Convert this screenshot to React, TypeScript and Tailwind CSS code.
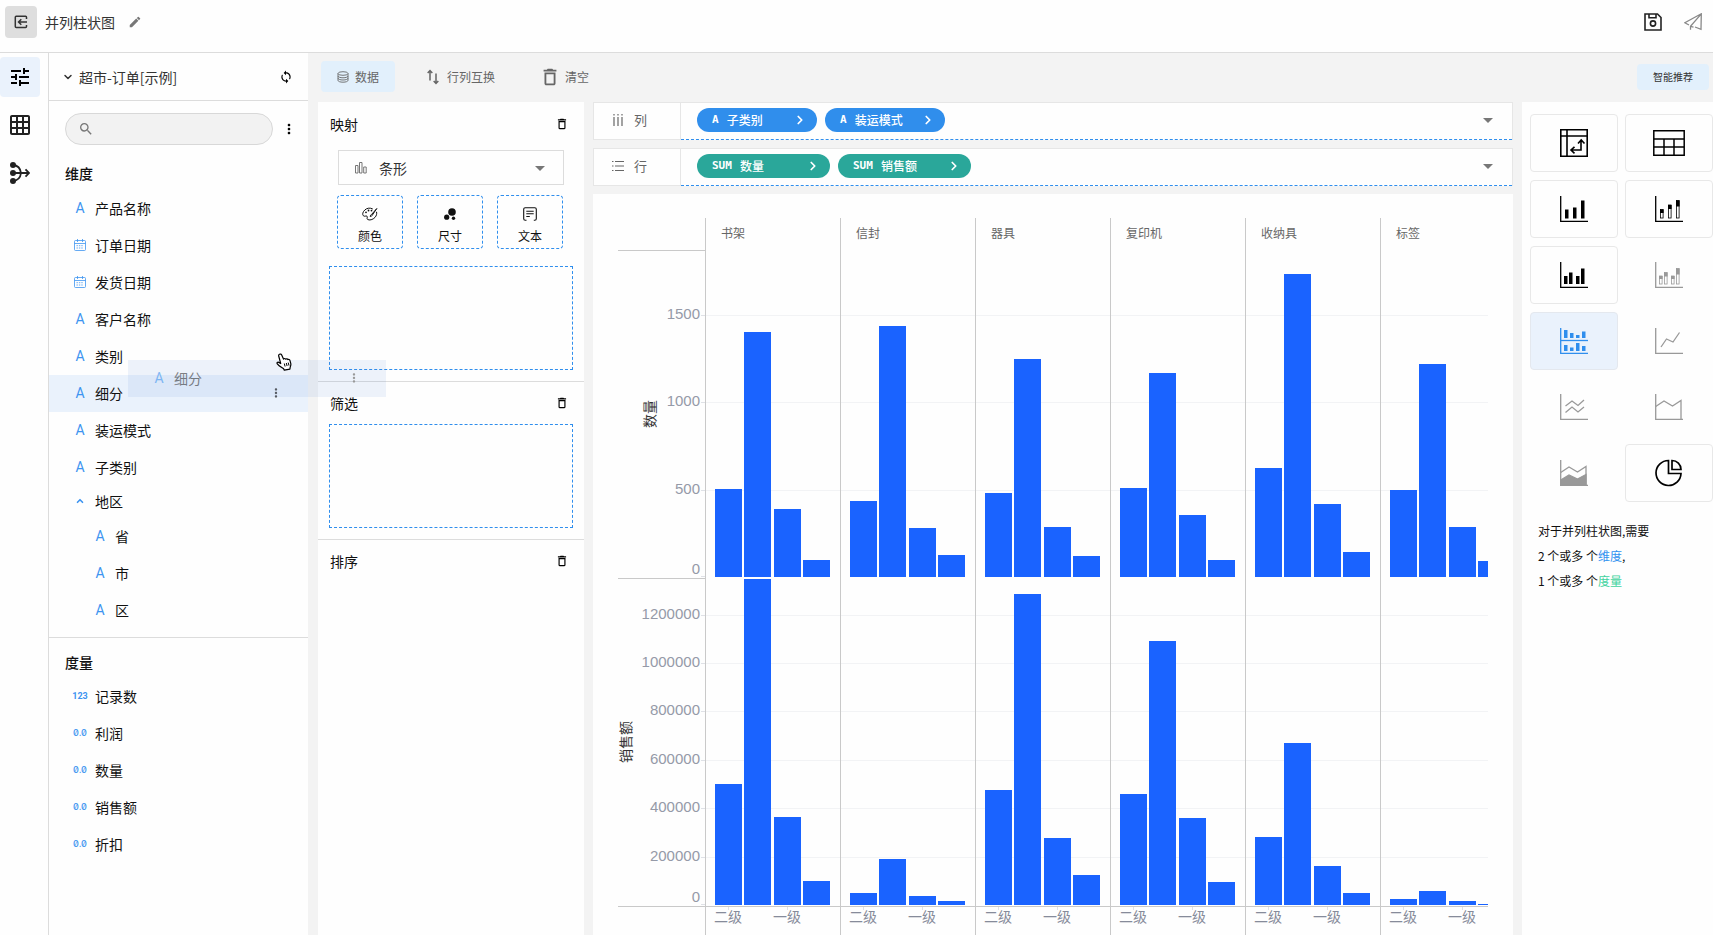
import { useState } from "react";
import type { ReactNode } from "react";
import { MdTune, MdGridOn, MdMoreVert, MdEdit, MdSearch, MdArrowDropDown, MdDeleteOutline, MdSync } from "react-icons/md";
import { ChevronDown, ChevronRight, ChevronUp } from "lucide-react";

type FieldKind = "text" | "date" | "int" | "float";
interface Field { name: string; kind: FieldKind; }

const dimensions: Field[] = [
  { name: "产品名称", kind: "text" },
  { name: "订单日期", kind: "date" },
  { name: "发货日期", kind: "date" },
  { name: "客户名称", kind: "text" },
  { name: "类别", kind: "text" },
  { name: "细分", kind: "text" },
  { name: "装运模式", kind: "text" },
  { name: "子类别", kind: "text" },
];
const regions: Field[] = [
  { name: "省", kind: "text" },
  { name: "市", kind: "text" },
  { name: "区", kind: "text" },
];
const measures: Field[] = [
  { name: "记录数", kind: "int" },
  { name: "利润", kind: "float" },
  { name: "数量", kind: "float" },
  { name: "销售额", kind: "float" },
  { name: "折扣", kind: "float" },
];

const chartData = [
  { name: "书架",   count: [504, 1406, 387, 100], sales: [500000, 1400000, 364000, 99000] },
  { name: "信封",   count: [438, 1435, 278, 126], sales: [49600, 190000, 37000, 16500] },
  { name: "器具",   count: [480, 1249, 286, 119], sales: [476000, 1285000, 277000, 125000] },
  { name: "复印机", count: [510, 1170, 357, 97],  sales: [457000, 1091000, 358000, 95000] },
  { name: "收纳具", count: [625, 1735, 416, 141], sales: [281000, 669000, 160000, 49600] },
  { name: "标签",   count: [501, 1218, 289, 92],  sales: [25000, 58000, 16500, 5800] },
];

/* ---------- icons ---------- */

function CalendarIcon() {
  return (
    <svg viewBox="0 0 12 12" className="w-3 h-3" fill="none" stroke="currentColor" strokeWidth="0.8">
      <rect x="0.5" y="1.5" width="11" height="10" rx="1"/>
      <path d="M0.5 4.5h11M3.5 0v3M8.5 0v3"/>
      <path d="M2.5 6.7h7M2.5 9h7" strokeDasharray="1.4 1"/>
    </svg>
  );
}

function BackIcon() {
  return (
    <svg viewBox="0 0 14 14" className="w-[14px] h-[14px]" fill="none" stroke="currentColor" strokeWidth="1.5">
      <path d="M12.5 4V2.2a.9.9 0 0 0-.9-.9H2.2a.9.9 0 0 0-.9.9v9.4c0 .5.4.9.9.9h9.4c.5 0 .9-.4.9-.9V10M13 7H4.8M7.3 4.2 4.5 7l2.8 2.8"/>
    </svg>
  );
}

function MergeIcon() {
  return (
    <svg viewBox="0 0 20 22" className="w-5 h-[22px]" fill="none" stroke="currentColor" strokeWidth="1.8">
      <g fill="currentColor" stroke="none"><circle cx="3" cy="3" r="3"/><circle cx="3" cy="11" r="3"/><circle cx="3" cy="19" r="3"/></g>
      <path d="M3 3c5 .5 7.5 4 8 8-.5 4-3 7.500-8 8M3 11h16M15.500 7.300 19 11l-3.500 3.700"/>
    </svg>
  );
}

function SaveIcon() {
  return (
    <svg viewBox="0 0 18 18" className="w-[18px] h-[18px]" fill="none" stroke="currentColor" strokeWidth="1.6">
      <path d="M1 1h12.500L17 4.500V17H1zM5 1v3.700h7V1"/><circle cx="9" cy="10.500" r="2.600"/>
    </svg>
  );
}

function SendIcon() {
  return (
    <svg viewBox="0 0 18 18" className="w-[18px] h-[18px]" fill="none" stroke="currentColor" strokeWidth="1.300">
      <path d="M5 12 .8 9.700 17.300.8 17 16.300l-6-2.300M17.300.8 6.500 13.300v3.500M6.500 13.300l3 .8"/>
    </svg>
  );
}

function DatabaseIcon() {
  return (
    <svg viewBox="0 0 12 12" className="w-3 h-3" fill="none" stroke="currentColor" strokeWidth="0.9">
      <ellipse cx="6" cy="2.500" rx="5" ry="1.800"/>
      <path d="M1 2.500V5c0 1 2.200 1.800 5 1.800S11 6 11 5V2.500M1 5v2.200c0 1 2.200 1.800 5 1.800s5-.8 5-1.800V5M1 7.200v2.200c0 1 2.200 1.800 5 1.800s5-.8 5-1.800V7.200"/>
    </svg>
  );
}

function SwapIcon() {
  return (
    <svg viewBox="0 0 12 16" className="w-3 h-4" fill="none" stroke="currentColor" strokeWidth="1.500">
      <path d="M3 11.500V1.500M.7 4 3 1.500 5.300 4M9 4.500v10M6.700 12 9 14.500l2.300-2.500"/>
    </svg>
  );
}

function PaletteIcon() {
  return (
    <svg viewBox="0 0 16 14" className="w-4 h-[14px]" fill="none" stroke="currentColor" strokeWidth="1">
      <path d="M10.800 2C8 .5 4.800 1 2.800 3 .6 5 .2 7.500 1.300 8.700c1.200 1.300 2.700-.3 3.700.5 1 .9-.6 2.300.5 3.200 1.700 1.300 5.500.3 7.500-2 1.500-1.700 2-3.700 1.500-5.600"/>
      <path d="m14.800 1.500-5.300 6c-.8.2-1.300 1-1.300 2 1 0 1.800-.4 2-1.200z"/>
      <g fill="currentColor" stroke="none"><circle cx="4" cy="5.300" r=".9"/><circle cx="6.500" cy="3.500" r=".9"/><circle cx="9.500" cy="3.600" r=".9"/></g>
    </svg>
  );
}

function BubbleIcon() {
  return (
    <svg viewBox="0 0 12 12" className="w-3 h-3" fill="currentColor">
      <circle cx="8" cy="4" r="3.800"/><circle cx="2.700" cy="9.200" r="2.600"/><circle cx="9.500" cy="10.200" r="1.700"/>
    </svg>
  );
}

function NoteIcon() {
  return (
    <svg viewBox="0 0 14 14" className="w-[14px] h-[14px]" fill="none" stroke="currentColor" strokeWidth="1.100">
      <path d="M3.500 13.300H2.200a1.500 1.500 0 0 1-1.500-1.500V2.200A1.500 1.500 0 0 1 2.200.7h9.600a1.500 1.500 0 0 1 1.500 1.500v9.600a1.500 1.500 0 0 1-1.500 1.500h-1M3.300 4.200h7.400M3.300 6.800h7.400M3.300 9.500h3.500"/>
    </svg>
  );
}

// L shaped axis that all of the chart type icons share
function Plot({ children }: { children: ReactNode }) {
  return (
    <svg viewBox="0 0 28 26" className="w-7 h-[26px]" fill="none" stroke="currentColor" strokeWidth="1.300">
      <path d="M.7 0v25.300H28"/>
      {children}
    </svg>
  );
}

const block = (x: number, y: number, h: number, w = 3.500) =>
  <rect key={x + "-" + y} x={x} y={y} width={w} height={h} fill="currentColor" stroke="none"/>;

// bar with a filled head and a hollow foot
const stack = (x: number, y: number, head: number) => (
  <g key={x}>
    <rect x={x + 0.500} y={y} width="2.600" height={22 - y} strokeWidth="0.800"/>
    <rect x={x} y={y} width="3.600" height={head} fill="currentColor" stroke="none"/>
  </g>
);

const chartTypes: { label: string; state: "on" | "off" | "active"; icon: ReactNode }[] = [
  { label: "透视表", state: "on", icon: (
    <svg viewBox="0 0 28 28" className="w-7 h-7" fill="none" stroke="currentColor" strokeWidth="1.600">
      <path d="M.8.800h26.400v26.400H.800zM.8 7h26.400M7 .8v26.400M21 12v9h-9.500M18 14.500l3.200-3.500 3.300 3.500M14.500 17.800 11 21l3.500 3.300"/>
    </svg>) },
  { label: "表格", state: "on", icon: (
    <svg viewBox="0 0 32 26" className="w-8 h-[26px]" fill="none" stroke="currentColor" strokeWidth="1.500">
      <path d="M.8.800h30.400v24.400H.800zM.8 9h30.400M.8 17h30.400M11 9v16M21 9v16"/>
    </svg>) },
  { label: "柱状图", state: "on", icon: <Plot>{block(5, 13.500, 9)}{block(13, 11.500, 11)}{block(21, 4.500, 18)}</Plot> },
  { label: "堆叠柱状图", state: "on", icon: <Plot>{stack(5, 13.500, 3.500)}{stack(13, 9, 4)}{stack(21, 4.500, 6)}</Plot> },
  { label: "分组柱状图", state: "on", icon: <Plot>{block(4, 14, 8)}{block(9, 10.500, 11.500)}{block(16, 14, 8)}{block(21, 6.500, 15.500)}</Plot> },
  { label: "分组堆叠柱状图", state: "off", icon: <Plot>{stack(4, 14, 3)}{stack(9, 10.500, 4)}{stack(16, 14, 3)}{stack(21, 6.500, 6)}</Plot> },
  { label: "并列柱状图", state: "active", icon: (
    <Plot>
      <path d="M.7 12.500H28"/>
      {block(4, 2, 8)}{block(10, 5, 5)}{block(16, 7, 3)}{block(22, 3.500, 6.500)}
      {block(4, 17, 6)}{block(10, 19.500, 3.500)}{block(16, 15, 8)}{block(22, 18, 5)}
    </Plot>) },
  { label: "折线图", state: "off", icon: <Plot><path d="m6 19 5.500-8 6.500 3 6.500-9.500"/></Plot> },
  { label: "多折线图", state: "off", icon: <Plot><path d="m5.500 12 6.500-5 6 4.500 6-5.500M5.500 18.500 12 13l6 5 6-5"/></Plot> },
  { label: "面积图", state: "off", icon: <Plot><path d="M.7 12.500 9 7l8.500 5L26 6.500v18.800"/></Plot> },
  { label: "堆叠面积图", state: "off", icon: <Plot><path d="M.7 12.500 9 7l8.500 5L26 6.500v18.800"/><path d="M.7 20 9 15l8.500 4L26 14.500v10.800H.700z" fill="currentColor"/></Plot> },
  { label: "饼图", state: "on", icon: (
    <svg viewBox="0 0 28 28" className="w-7 h-7" fill="none" stroke="currentColor" strokeWidth="1.700">
      <path d="M13.500 1.500a12.500 12.500 0 1 0 12.500 13H13.500zM17 1.500V10.500h9c0-5-4-9-9-9z"/>
    </svg>) },
];

/* ---------- field list ---------- */

function KindMark({ kind }: { kind: FieldKind }) {
  if (kind === "date") return <CalendarIcon/>;
  if (kind === "int") return <span className="font-[Roboto] text-[9px] leading-3 font-bold">123</span>;
  if (kind === "float") return <span className="font-[Inter] text-[9px] leading-3 font-medium slashed-zero">0.0</span>;
  return <span className="font-[Roboto] text-[14px] leading-3">A</span>;
}

function FieldRow({ field, nested, selected }: { field: Field; nested?: boolean; selected?: boolean }) {
  return (
    <li className={`h-[37px] flex items-center pb-[2px] pr-[25px] ${nested ? "pl-[41px]" : "pl-[21px]"} ${selected ? "bg-[#eaf2fc]" : ""}`}>
      <span className="w-5 flex justify-center text-[#3d94f0]"><KindMark kind={field.kind}/></span>
      <span className="ml-[5px] flex-1">{field.name}</span>
      {selected && <button aria-label="更多"><MdMoreVert className="w-[14px] h-[14px] text-[#555]"/></button>}
    </li>
  );
}

function FieldPanel() {
  return (
    <aside className="w-[260px] shrink-0 bg-[#fefefe] border-l border-[#dcdcdc] text-[#111]">
      <div className="h-12 flex items-center pl-[13px] pr-[15px] border-b border-[#dcdcdc] text-[#333]">
        <ChevronDown className="w-3 h-3" strokeWidth={3}/>
        <span className="ml-[5px] flex-1">超市-订单[示例]</span>
        <button aria-label="刷新"><MdSync className="w-[14px] h-[14px] text-black"/></button>
      </div>
      <div className="flex items-center pt-3 pl-4 pr-[11px]">
        <label className="flex-1 h-8 flex items-center rounded-full bg-[#f2f2f2] border border-[#d8d8d8] px-3 text-[#777]">
          <MdSearch className="w-4 h-4"/>
          <input type="text" aria-label="搜索字段" className="min-w-0 flex-1 bg-transparent outline-none"/>
        </label>
        <button aria-label="更多操作" className="ml-2"><MdMoreVert className="w-4 h-4 text-black"/></button>
      </div>

      <h2 className="mt-[18px] mb-[7px] pl-4 font-medium leading-5">维度</h2>
      <ul>
        {dimensions.map(f => <FieldRow key={f.name} field={f} selected={f.name === "细分"}/>)}
        <li className="h-8 flex items-center pb-[2px] pl-[21px]">
          <span className="w-5 flex justify-center text-[#3d94f0]"><ChevronUp className="w-[10px] h-[10px]" strokeWidth={4}/></span>
          <span className="ml-[5px]">地区</span>
        </li>
        {regions.map(f => <FieldRow key={f.name} field={f} nested/>)}
      </ul>

      <div className="mt-2 border-t border-[#dcdcdc] pt-[14px]">
        <h2 className="mb-[6px] pl-4 font-medium leading-5">度量</h2>
        <ul>{measures.map(f => <FieldRow key={f.name} field={f}/>)}</ul>
      </div>
    </aside>
  );
}

/* ---------- mapping ---------- */

function SectionTitle({ title }: { title: string }) {
  return (
    <div className="h-[42px] flex items-center justify-between pl-3 pr-[15px] text-[#111]">
      <h2>{title}</h2>
      <button aria-label={`清空${title}`}><MdDeleteOutline className="w-[14px] h-[14px] text-black"/></button>
    </div>
  );
}

const DropZone = () => <div className="mx-[11px] h-[104px] border border-dashed border-[#2f8eed]"/>;

function MappingPanel() {
  const channels = [
    { label: "颜色", icon: <PaletteIcon/> },
    { label: "尺寸", icon: <BubbleIcon/> },
    { label: "文本", icon: <NoteIcon/> },
  ];
  return (
    <section className="w-[266px] shrink-0 bg-[#fefefe]">
      <div className="pt-px pb-[11px] border-b border-[#dcdcdc]">
        <SectionTitle title="映射"/>
        <div className="relative mx-5 mt-[5px]">
          <svg viewBox="0 0 12 12" className="absolute left-[17px] top-3 w-3 h-3 text-[#777]" fill="none" stroke="currentColor" strokeWidth="1">
            <path d="M.5 3.500h2.500v7.500H.500zM4.500.5H7V11H4.500zM8.700 5h2.500v6H8.700z"/>
          </svg>
          <select aria-label="图形" className="w-full h-[35px] pl-10 appearance-none bg-transparent border border-[#dcdcdc] text-[#333] outline-none">
            <option>条形</option>
            <option>折线</option>
          </select>
          <MdArrowDropDown className="absolute right-3 top-[6px] w-6 h-6 text-[#777] pointer-events-none"/>
        </div>
        <div className="flex gap-[14px] mt-[10px] mb-[17px] ml-[19px] mr-[21px]">
          {channels.map(c => (
            <button key={c.label} className="flex-1 h-[54px] flex flex-col items-center justify-end pb-1 rounded border border-dashed border-[#2f8eed] text-xs leading-4 text-[#111]">
              <span className="h-[23px] flex items-center pb-[6px]">{c.icon}</span>
              {c.label}
            </button>
          ))}
        </div>
        <DropZone/>
      </div>
      <div className="pb-[11px] border-b border-[#dcdcdc]">
        <SectionTitle title="筛选"/>
        <DropZone/>
      </div>
      <SectionTitle title="排序"/>
    </section>
  );
}

/* ---------- shelves ---------- */

function Pill({ mark, name, green }: { mark: string; name: string; green?: boolean }) {
  return (
    <button className={`h-6 flex items-center rounded-full pl-[15px] pr-[10px] text-xs text-white font-medium ${green ? "w-[133px] bg-[#2aa79a]" : "w-[120px] bg-[#308eec]"}`}>
      <span className="font-['DejaVu_Sans_Mono'] text-[11px] font-bold">{mark}</span>
      <span className="ml-2 flex-1 text-left">{name}</span>
      <ChevronRight className="w-[14px] h-[14px]" strokeWidth={3}/>
    </button>
  );
}

function Shelf({ icon, title, children }: { icon: ReactNode; title: string; children: ReactNode }) {
  return (
    <div className="h-[38px] flex bg-[#fefefe] border-x border-t border-[#e6e6e6]">
      <div className="w-[87px] flex items-center pb-[2px] pl-[18px] border-r border-b border-[#e6e6e6] text-[#666] text-[13px]">
        {icon}<span className="ml-[10px]">{title}</span>
      </div>
      <div className="flex-1 flex items-center gap-2 pb-[2px] pl-4 pr-3 border-b border-dashed border-[#2f8eed]">
        {children}
        <button aria-label={`展开${title}`} className="ml-auto"><MdArrowDropDown className="w-6 h-6 text-[#777]"/></button>
      </div>
    </div>
  );
}

/* ---------- chart ---------- */

const COL = 135;
const X0 = 89;      // left edge of the first column
const ZERO1 = 359;
const ZERO2 = 687;
const k1 = 87.3 / 500;
const k2 = 48.4 / 200000;

function Chart() {
  const ticks1 = [500, 1000, 1500];
  const ticks2 = [200000, 400000, 600000, 800000, 1000000, 1200000];
  const y1 = (v: number) => Math.round(ZERO1 - v * k1);
  const y2 = (v: number) => Math.round(ZERO2 - v * k2);

  return (
    <svg className="w-full h-[717px] block" shapeRendering="crispEdges" role="img" aria-label="并列柱状图">
      {/* grid */}
      <g stroke="#f2f3f5">
        {ticks1.map(t => <line key={t} x1={X0} x2="100%" y1={y1(t) + 0.5} y2={y1(t) + 0.5}/>)}
        {ticks2.map(t => <line key={t} x1={X0} x2="100%" y1={y2(t) + 0.5} y2={y2(t) + 0.5}/>)}
      </g>

      {/* value axes */}
      <g className="font-['Liberation_Sans'] text-[15px]" fill="#959aa8" textAnchor="end">
        {ticks1.map(t => <text key={t} x="84" y={y1(t) + 4}>{t}</text>)}
        <text x="84" y="356">0</text>
        {ticks2.map(t => <text key={t} x="84" y={y2(t) + 4}>{t}</text>)}
        <text x="84" y="684">0</text>
      </g>
      <g stroke="#dfe1e6">
        {[...ticks1.map(y1), ZERO1 - 1, ...ticks2.map(y2), ZERO2 - 1].map(y => <line key={y} x1={X0 - 4} x2={X0} y1={y + 0.5} y2={y + 0.5}/>)}
      </g>
      <g fill="#333" textAnchor="middle" className="text-[14px]">
        <text transform="translate(39 196) rotate(-90)">数量</text>
        <text transform="translate(15 524) rotate(-90)">销售额</text>
      </g>

      {chartData.map((d, i) => {
        const x = X0 + i * COL;
        return (
          <g key={d.name}>
            <line x1={x + 0.5} x2={x + 0.5} y1="0" y2="717" stroke="#c9c9c9"/>
            <text x={x + 16} y="20" fill="#666" className="text-xs">{d.name}</text>
            <g fill="#1a63ff">
              {d.count.map((v, j) => <rect key={j} x={x + 10 + Math.floor(j * 29.5)} y={y1(v)} width="27" height={ZERO1 - y1(v)}/>)}
              {d.sales.map((v, j) => {
                const top = Math.max(y2(v), 361);
                return <rect key={j} x={x + 10 + Math.floor(j * 29.5)} y={top} width="27" height={ZERO2 - top}/>;
              })}
            </g>
            <g stroke="#dfe1e6"><path d={`M${x + 23.5} 689v3M${x + 82.5} 689v3`}/></g>
            <g fill="#868b9a" textAnchor="middle" className="text-[14px]">
              <text x={x + 23} y="704">二级</text>
              <text x={x + 82} y="704">一级</text>
            </g>
          </g>
        );
      })}

      <g stroke="#c9c9c9">
        <path d={`M2 32.500H${X0}M2 360.500H${X0}`}/>
        <line x1="2" x2="100%" y1="688.5" y2="688.5"/>
      </g>
    </svg>
  );
}

/* ---------- chart type picker ---------- */

function Recommend() {
  const look = {
    on: "border-[#e8e8e8] text-black",
    off: "border-transparent text-[#999]",
    active: "border-[#e4e8ee] bg-[#eaf2fc] text-[#2f8eed]",
  };
  return (
    <aside className="w-[191px] shrink-0 bg-[#fefefe] pt-3 pl-2">
      <div className="grid grid-cols-2 gap-x-[7px] gap-y-2">
        {chartTypes.map(t => (
          <button key={t.label} aria-label={t.label} disabled={t.state === "off"}
            className={`h-[58px] flex items-center justify-center rounded border ${look[t.state]}`}>
            {t.icon}
          </button>
        ))}
      </div>
      <div className="mt-4 pl-2 text-xs leading-[25px] text-[#111]">
        <p>对于并列柱状图,需要</p>
        <p>2 个或多 个<span className="text-[#3192f0]">维度</span>,</p>
        <p>1 个或多 个<span className="text-[#42d3a0]">度量</span></p>
      </div>
    </aside>
  );
}

/* ---------- page ---------- */

export default function App() {
  const [tab, setTab] = useState("fields");
  const rail = [
    { id: "fields", label: "字段", icon: <MdTune className="w-6 h-6"/> },
    { id: "table", label: "数据表", icon: <MdGridOn className="w-6 h-6"/> },
    { id: "merge", label: "关联", icon: <MergeIcon/> },
  ];

  return (
    <div className="relative h-screen flex flex-col overflow-hidden bg-[#f3f3f3] font-['Noto_Sans_CJK_SC',sans-serif] text-sm text-[#333]">
      <header className="h-[53px] shrink-0 flex items-start bg-[#fefefe] border-b border-[#dcdcdc] pt-[6px] pl-[5px] pr-[11px]">
        <button aria-label="返回" className="w-8 h-8 flex items-center justify-center rounded bg-[#dedede]"><BackIcon/></button>
        <div className="h-8 flex items-center ml-2">
          <h1>并列柱状图</h1>
          <button aria-label="重命名" className="ml-[13px]"><MdEdit className="w-[14px] h-[14px] text-[#777]"/></button>
        </div>
        <div className="h-8 ml-auto flex items-center gap-[22px]">
          <button aria-label="保存" className="text-[#222]"><SaveIcon/></button>
          <button aria-label="发布" className="text-[#888]"><SendIcon/></button>
        </div>
      </header>

      <div className="flex-1 min-h-0 flex">
        <nav className="w-12 shrink-0 bg-[#fefefe] pt-1 flex flex-col gap-2 text-[#222]">
          {rail.map(r => (
            <button key={r.id} aria-label={r.label} onClick={() => setTab(r.id)}
              className={`w-10 h-10 flex items-center justify-center rounded-sm ${tab === r.id ? "bg-[#eaf2fc] text-black" : ""}`}>
              {r.icon}
            </button>
          ))}
        </nav>

        <FieldPanel/>

        <main className="flex-1 min-w-0 flex flex-col pl-[10px]">
          <div className="h-[49px] shrink-0 flex items-center text-xs text-[#666] pl-[3px] pr-1 pb-[2px]">
            <button className="w-[74px] h-[31px] flex items-center justify-center gap-[6px] rounded bg-[#e2f0fc]"><DatabaseIcon/>数据</button>
            <button className="ml-8 flex items-center gap-2"><SwapIcon/>行列互换</button>
            <button className="ml-11 flex items-center gap-1"><MdDeleteOutline className="w-[22px] h-[22px]"/>清空</button>
            <button className="ml-auto w-[72px] h-[26px] rounded bg-[#e2f0fc] text-[10px] text-[#333]">智能推荐</button>
          </div>

          <div className="flex-1 min-h-0 flex">
            <MappingPanel/>
            <div className="flex-1 min-w-0 flex flex-col gap-2 px-[9px]">
              <Shelf title="列" icon={
                <svg viewBox="0 0 12 12" className="w-3 h-3" stroke="currentColor" strokeWidth="1.200"><path d="M2 0v1.500M2 3v9M6 0v1.500M6 3v9M10 0v1.500M10 3v9"/></svg>}>
                <Pill mark="A" name="子类别"/>
                <Pill mark="A" name="装运模式"/>
              </Shelf>
              <Shelf title="行" icon={
                <svg viewBox="0 0 12 12" className="w-3 h-3" stroke="currentColor" strokeWidth="1.200"><path d="M0 1.500h1.500M3 1.500h9M0 6h1.500M3 6h9M0 10.500h1.500M3 10.500h9"/></svg>}>
                <Pill mark="SUM" name="数量" green/>
                <Pill mark="SUM" name="销售额" green/>
              </Shelf>
              <div className="flex-1 min-h-0 overflow-hidden bg-[#fefefe] pt-6 pl-[23px] pr-[25px]">
                <Chart/>
              </div>
            </div>
            <Recommend/>
          </div>
        </main>
      </div>

      {/* field being dragged */}
      <div className="absolute left-[128px] top-[360px] w-[258px] h-[37px] flex items-center pb-[2px] bg-[#5c85d6]/10 pl-[21px] pr-[25px] pointer-events-none">
        <span className="w-5 flex justify-center text-[#3d94f0] opacity-60"><KindMark kind="text"/></span>
        <span className="ml-[5px] flex-1 opacity-60">细分</span>
        <MdMoreVert className="w-[14px] h-[14px] text-[#999]"/>
      </div>
      <svg viewBox="0 0 16 18" className="absolute left-[276px] top-[353px] w-4 h-[18px] pointer-events-none" fill="#fff" stroke="#000" strokeWidth="1.200" strokeLinejoin="round">
        <path d="M3.500 1.200c.9-.5 1.800 0 2.200.9l1.800 4c.5-.8 1.600-.8 2.200.1.500-.6 1.700-.5 2.100.4.800-.5 1.900 0 2.200 1l.8 3c.3 1.500-.2 2.400-.6 3.500l-.3 2-5.600 1-.7-1.300C5.800 14.500 3 13 1.300 10.800c-.8-1 .3-2 1.400-1.400l2 1.100L2.700 3c-.2-.7.100-1.400.8-1.800z"/>
        <path d="m8.300 10.500.8 3M10.300 10l.8 3M12.200 9.600l.8 3" fill="none" strokeWidth="1"/>
      </svg>
    </div>
  );
}
